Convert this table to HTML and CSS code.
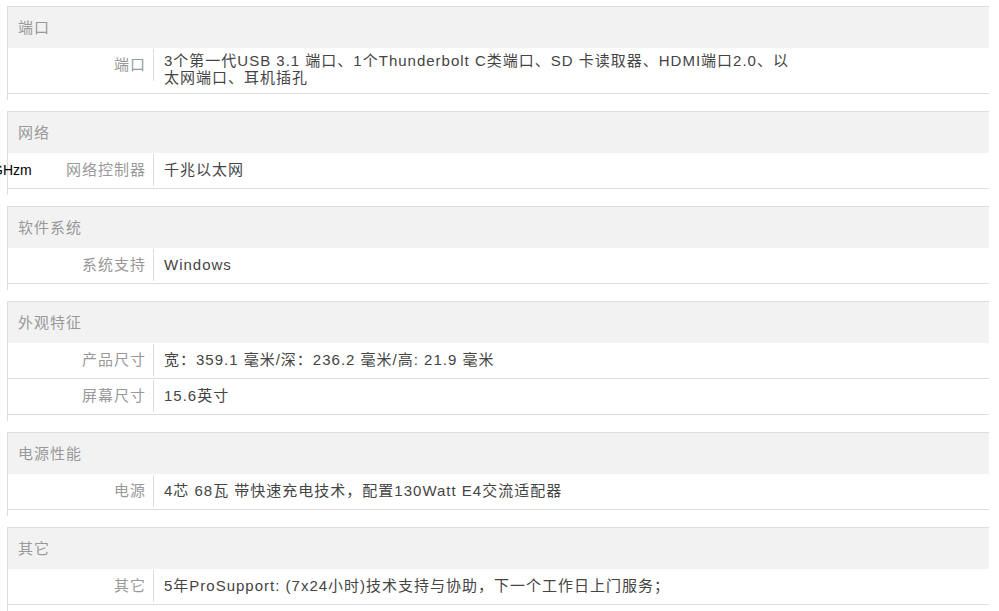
FILE: index.html
```html
<!DOCTYPE html>
<html lang="zh-CN">
    <head>
        <title>规格参数</title>
        <meta charset="utf-8">
        <meta name="viewport" content="width=device-width, initial-scale=1.0">
        <link rel="stylesheet" href="styles.css">
    </head>
    <body>
        <span class="stray">GHzm</span>
        <div class="specs">

            <div class="group">
                <h3 class="group-title">端口</h3>
                <dl class="item">
                    <dt>端口</dt>
                    <dd>3个第一代USB 3.1 端口、1个Thunderbolt C类端口、SD 卡读取器、HDMI端口2.0、以太网端口、耳机插孔</dd>
                </dl>
            </div>

            <div class="group">
                <h3 class="group-title">网络</h3>
                <dl class="item">
                    <dt>网络控制器</dt>
                    <dd>千兆以太网</dd>
                </dl>
            </div>

            <div class="group">
                <h3 class="group-title">软件系统</h3>
                <dl class="item">
                    <dt>系统支持</dt>
                    <dd>Windows</dd>
                </dl>
            </div>

            <div class="group">
                <h3 class="group-title">外观特征</h3>
                <dl class="item">
                    <dt>产品尺寸</dt>
                    <dd>宽：359.1 毫米/深：236.2 毫米/高: 21.9 毫米</dd>
                </dl>
                <dl class="item">
                    <dt>屏幕尺寸</dt>
                    <dd>15.6英寸</dd>
                </dl>
            </div>

            <div class="group">
                <h3 class="group-title">电源性能</h3>
                <dl class="item">
                    <dt>电源</dt>
                    <dd>4芯 68瓦 带快速充电技术，配置130Watt E4交流适配器</dd>
                </dl>
            </div>

            <div class="group">
                <h3 class="group-title">其它</h3>
                <dl class="item">
                    <dt>其它</dt>
                    <dd>5年ProSupport: (7x24小时)技术支持与协助，下一个工作日上门服务；</dd>
                </dl>
            </div>

        </div>
    </body>
</html>
```

FILE: styles.css
```css
body {
    margin: 0;
    background: #fff;
    font-family: "Liberation Sans", Arial, "Noto Sans CJK SC", sans-serif;
    font-size: 15px;
    letter-spacing: 1px;
    color: #333;
    overflow: hidden;
}
.stray {
    position: absolute;
    left: -8px;
    top: 162px;
    font-size: 14px;
    letter-spacing: 0;
    line-height: 17px;
    color: #000;
}
.specs {
    margin: 6px 10px 0 7px;
}
.group {
    border-top: 1px solid #ddd;
    border-left: 1px solid #ddd;
    padding-bottom: 6px;
    margin-bottom: 11px;
}
.group-title {
    margin: 0;
    height: 41px;
    line-height: 42px;
    padding-left: 10px;
    background: #f2f2f2;
    font-size: 15px;
    font-weight: normal;
    color: #999;
}
.item {
    display: flex;
    align-items: center;
    margin: 0;
    padding: 1px 0 2px;
    border-bottom: 1px solid #ddd;
}
.item dt {
    flex: none;
    align-self: flex-start;
    width: 138px;
    height: 32px;
    line-height: 32px;
    padding-right: 7px;
    text-align: right;
    color: #999;
    border-right: 1px solid #ddd;
}
.item dd {
    margin: 0;
    width: 630px;
    padding: 3px 0 5px 10px;
    line-height: 17px;
    color: #444;
}
```
